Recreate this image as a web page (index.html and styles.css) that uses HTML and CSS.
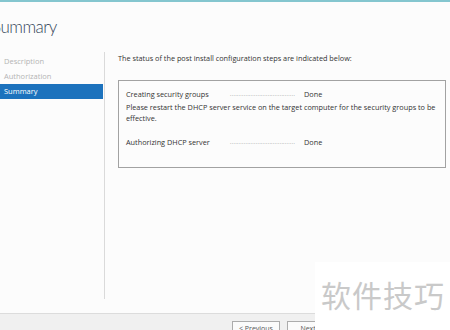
FILE: index.html
```html
<!DOCTYPE html>
<html>
<head>
  <meta charset="UTF-8">
  <title>Summary</title>
  <link rel="stylesheet" href="styles.css">
</head>
<body>
  <div class="page">
    <div class="topbar"></div>
    <div class="header">
      <h1 class="title">Summary</h1>
    </div>
    <div class="main">
      <ul class="nav">
        <li class="nav-item">Description</li>
        <li class="nav-item">Authorization</li>
        <li class="nav-item active">Summary</li>
      </ul>
      <div class="content">
        <p class="intro">The status of the post install configuration steps are indicated below:</p>
        <div class="status-box">
          <div class="step">
            <span class="step-name">Creating security groups</span>
            <span class="step-dots">......................................</span>
            <span class="step-result">Done</span>
          </div>
          <p class="step-note">Please restart the DHCP server service on the target computer for the security groups to be effective.</p>
          <div class="step step-last">
            <span class="step-name">Authorizing DHCP server</span>
            <span class="step-dots">......................................</span>
            <span class="step-result">Done</span>
          </div>
        </div>
      </div>
    </div>
    <div class="footer">
      <button class="btn">&lt; Previous</button>
      <button class="btn">Next &gt;</button>
    </div>
    <div class="watermark">软件技巧</div>
  </div>
</body>
</html>
```

FILE: styles.css
```css
body {
  margin: 0;
  overflow: hidden;
  font-family: "Open Sans", "Noto Sans", sans-serif;
  background: #fcfcfc;
}
.page {
  position: relative;
  width: 450px;
  height: 330px;
  display: flex;
  flex-direction: column;
  overflow: hidden;
}
.topbar {
  height: 2px;
  background: #84c6cf;
}
.header {
  height: 50px;
  display: flex;
  align-items: center;
}
.title {
  margin: 0 0 2px -8px;
  font-family: Lato, "Open Sans", sans-serif;
  font-size: 17px;
  font-weight: 300;
  letter-spacing: -0.5px;
  color: #34465a;
}
.main {
  flex: 1;
  display: flex;
  padding-bottom: 14px;
}
.nav {
  list-style: none;
  margin: 0;
  padding: 2px 0 0;
  width: 104px;
  border-right: 1px solid #dadada;
}
.nav-item {
  height: 15px;
  line-height: 15px;
  padding-left: 4px;
  font-size: 7.5px;
  color: #b4b4b4;
}
.nav-item.active {
  width: 99px;
  background: #1c72bd;
  color: #fff;
}
.content {
  flex: 1;
  padding: 1px 4px 0 13px;
  font-size: 7.3px;
  color: #333;
}
.intro {
  margin: 0 0 16px;
  line-height: 11px;
}
.status-box {
  height: 78px;
  border: 1px solid #a2a2a2;
  padding: 8px 7px 0;
}
.step {
  display: flex;
  line-height: 11px;
  margin-bottom: 2px;
}
.step-last {
  margin-top: 13px;
}
.step-name {
  width: 104px;
}
.step-dots {
  width: 70px;
  margin-right: 4px;
  white-space: nowrap;
  font-size: 5px;
  letter-spacing: 0.4px;
  color: #777;
}
.step-note {
  margin: 0;
  line-height: 11px;
}
.footer {
  height: 9px;
  border-top: 1px solid #dcdcdc;
  background: #f0f0f0;
  display: flex;
  gap: 7px;
  padding: 7px 0 0 232px;
}
.btn {
  flex: none;
  width: 48px;
  height: 14px;
  padding: 0;
  font-family: inherit;
  font-size: 7px;
  color: #555;
  background: #fbfbfb;
  border: 1px solid #acacac;
  border-radius: 0;
}
.watermark {
  position: absolute;
  left: 315px;
  top: 262px;
  width: 135px;
  height: 68px;
  background: #fff;
  padding: 14px 0 0 6px;
  box-sizing: border-box;
  font-family: "Noto Sans CJK SC", sans-serif;
  font-size: 30px;
  line-height: 36px;
  letter-spacing: 1px;
  color: #c9c9c9;
}
```
